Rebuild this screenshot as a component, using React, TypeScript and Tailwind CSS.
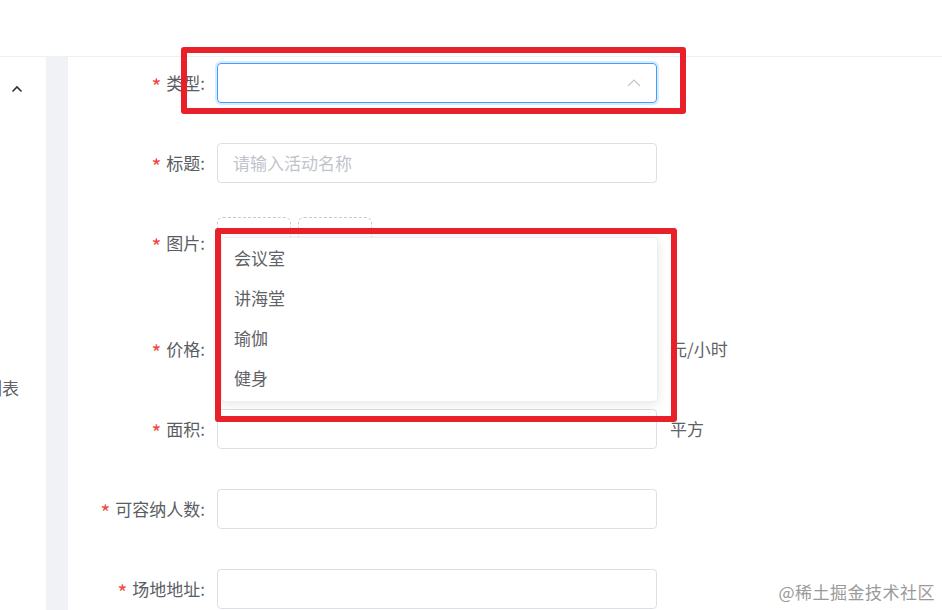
import React from 'react';

const font = { fontFamily: '"Noto Sans CJK SC", "Noto Sans", sans-serif' };

function Label({ text }: { text: string }) {
  return (
    <div className="w-[149px] shrink-0 pr-3 flex items-center justify-end h-10 text-[17px] text-[#5a5d63]">
      <span className="text-[#f0473f] mr-[5px] text-[21px] leading-none pt-[6px]">*</span>
      <span>{text}:</span>
    </div>
  );
}

function TextRow({ label, placeholder, unit }: { label: string; placeholder?: string; unit?: string }) {
  return (
    <div className="flex items-center h-10">
      <Label text={label} />
      <div className="w-[440px] h-10 rounded border border-[#dcdfe6] flex items-center px-[15px] text-[17px] text-[#c0c4cc]">
        {placeholder}
      </div>
      {unit && <span className="ml-[13px] text-[17px] text-[#606266]">{unit}</span>}
    </div>
  );
}

export default function App() {
  const options = ['会议室', '讲海堂', '瑜伽', '健身'];

  return (
    <div className="relative w-[942px] h-[610px] overflow-hidden bg-white" style={font}>
      {/* top bar */}
      <div className="h-[57px] border-b border-[#eef0f3] bg-white" />

      <div className="flex h-[553px]">
        {/* side menu */}
        <div className="w-[46px] shrink-0 overflow-hidden bg-white">
          <div className="h-[62px] flex items-center pl-[11px] pt-[2px]">
            <svg width="12" height="8" viewBox="0 0 12 8" fill="none">
              <path d="M1.5 6.5 L6 2 L10.5 6.5" stroke="#303133" strokeWidth="1.6" />
            </svg>
          </div>
          <div className="mt-[259px] -ml-[15px] whitespace-nowrap text-[17px] text-[#606266] leading-[20px]">
            列表
          </div>
        </div>
        <div className="w-[22px] shrink-0 bg-[#f0f2f5]" />

        {/* form */}
        <div className="flex-1 pt-[6px] flex flex-col gap-10">
          <div className="flex items-center h-10">
            <Label text="类型" />
            <div className="w-[440px] h-10 rounded border border-[#409eff] shadow-[0_0_0_2px_#d9ecff] flex items-center justify-end pr-[15px]">
              <svg width="14" height="8" viewBox="0 0 14 8" fill="none">
                <path d="M1 7 L7 1 L13 7" stroke="#c0c4cc" strokeWidth="1.2" />
              </svg>
            </div>
          </div>

          <TextRow label="标题" placeholder="请输入活动名称" />

          <div className="flex items-start h-[66px]">
            <Label text="图片" />
            <div className="flex gap-[7px] -mt-[6px]">
              <div className="w-[74px] h-[74px] rounded-md border border-dashed border-[#c0ccda]" />
              <div className="w-[74px] h-[74px] rounded-md border border-dashed border-[#c0ccda]" />
            </div>
          </div>

          <TextRow label="价格" unit="元/小时" />
          <TextRow label="面积" unit="平方" />
          <TextRow label="可容纳人数" />
          <TextRow label="场地地址" />
        </div>
      </div>

      {/* select dropdown */}
      <div className="absolute left-[221px] top-[237px] w-[437px] h-[165px] bg-white rounded border border-[#eceef2] shadow-[0_2px_12px_0_rgba(0,0,0,0.1)]">
        {options.map((o) => (
          <div key={o} className="h-10 flex items-center px-3 text-[17px] text-[#606266]">
            {o}
          </div>
        ))}
      </div>

      {/* annotation boxes */}
      <div className="absolute left-[181px] top-[47px] w-[505px] h-[67px] border-[6px] border-[#e8202a] rounded-[3px]" />
      <div className="absolute left-[215px] top-[228px] w-[462px] h-[194px] border-[6px] border-[#e8202a] rounded-[3px]" />

      {/* watermark */}
      <div className="absolute right-[7px] bottom-[6px] text-[17px] text-[#9a9a9a] tracking-[0.5px]">
        @稀土掘金技术社区
      </div>
    </div>
  );
}
